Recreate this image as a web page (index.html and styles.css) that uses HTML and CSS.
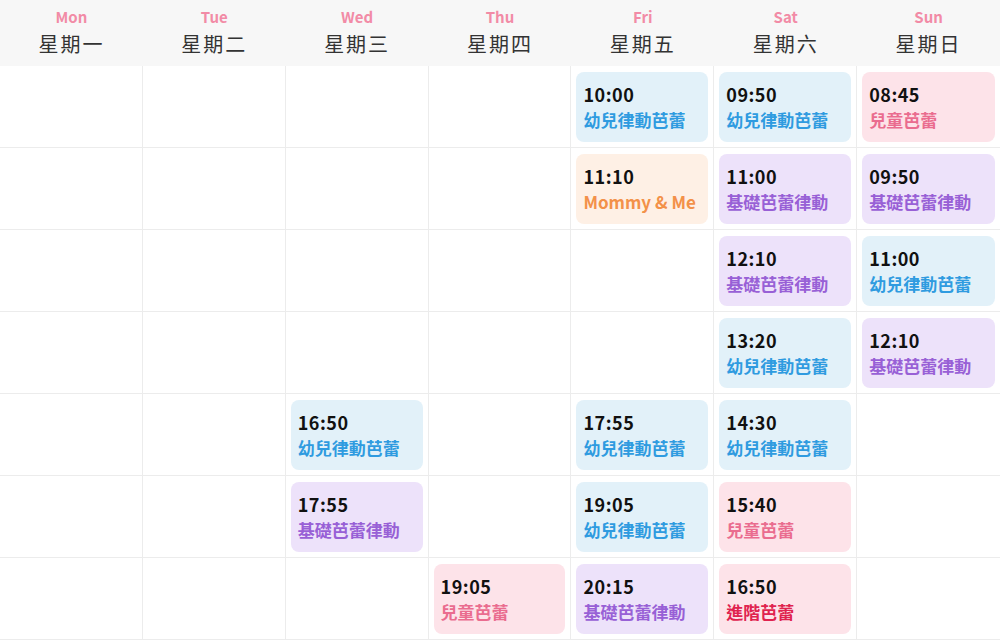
FILE: index.html
```html
<!DOCTYPE html>
<html lang="zh-Hant">

<head>
    <meta charset="UTF-8">
    <meta name="viewport" content="width=device-width, initial-scale=1.0">
    <title>課程時間表</title>
    <link rel="stylesheet" href="styles.css">
</head>

<body>
    <div class="timetable">
        <div class="week-head">
            <div class="day"><span class="en">Mon</span><span class="zh">星期一</span></div>
            <div class="day"><span class="en">Tue</span><span class="zh">星期二</span></div>
            <div class="day"><span class="en">Wed</span><span class="zh">星期三</span></div>
            <div class="day"><span class="en">Thu</span><span class="zh">星期四</span></div>
            <div class="day"><span class="en">Fri</span><span class="zh">星期五</span></div>
            <div class="day"><span class="en">Sat</span><span class="zh">星期六</span></div>
            <div class="day"><span class="en">Sun</span><span class="zh">星期日</span></div>
        </div>

        <div class="grid">
            <!-- row 1 -->
            <div class="cell"></div>
            <div class="cell"></div>
            <div class="cell"></div>
            <div class="cell"></div>
            <div class="cell"><div class="lesson blue"><span class="time">10:00</span><span class="name">幼兒律動芭蕾</span></div></div>
            <div class="cell"><div class="lesson blue"><span class="time">09:50</span><span class="name">幼兒律動芭蕾</span></div></div>
            <div class="cell"><div class="lesson pink"><span class="time">08:45</span><span class="name">兒童芭蕾</span></div></div>

            <!-- row 2 -->
            <div class="cell"></div>
            <div class="cell"></div>
            <div class="cell"></div>
            <div class="cell"></div>
            <div class="cell"><div class="lesson orange"><span class="time">11:10</span><span class="name">Mommy &amp; Me</span></div></div>
            <div class="cell"><div class="lesson purple"><span class="time">11:00</span><span class="name">基礎芭蕾律動</span></div></div>
            <div class="cell"><div class="lesson purple"><span class="time">09:50</span><span class="name">基礎芭蕾律動</span></div></div>

            <!-- row 3 -->
            <div class="cell"></div>
            <div class="cell"></div>
            <div class="cell"></div>
            <div class="cell"></div>
            <div class="cell"></div>
            <div class="cell"><div class="lesson purple"><span class="time">12:10</span><span class="name">基礎芭蕾律動</span></div></div>
            <div class="cell"><div class="lesson blue"><span class="time">11:00</span><span class="name">幼兒律動芭蕾</span></div></div>

            <!-- row 4 -->
            <div class="cell"></div>
            <div class="cell"></div>
            <div class="cell"></div>
            <div class="cell"></div>
            <div class="cell"></div>
            <div class="cell"><div class="lesson blue"><span class="time">13:20</span><span class="name">幼兒律動芭蕾</span></div></div>
            <div class="cell"><div class="lesson purple"><span class="time">12:10</span><span class="name">基礎芭蕾律動</span></div></div>

            <!-- row 5 -->
            <div class="cell"></div>
            <div class="cell"></div>
            <div class="cell"><div class="lesson blue"><span class="time">16:50</span><span class="name">幼兒律動芭蕾</span></div></div>
            <div class="cell"></div>
            <div class="cell"><div class="lesson blue"><span class="time">17:55</span><span class="name">幼兒律動芭蕾</span></div></div>
            <div class="cell"><div class="lesson blue"><span class="time">14:30</span><span class="name">幼兒律動芭蕾</span></div></div>
            <div class="cell"></div>

            <!-- row 6 -->
            <div class="cell"></div>
            <div class="cell"></div>
            <div class="cell"><div class="lesson purple"><span class="time">17:55</span><span class="name">基礎芭蕾律動</span></div></div>
            <div class="cell"></div>
            <div class="cell"><div class="lesson blue"><span class="time">19:05</span><span class="name">幼兒律動芭蕾</span></div></div>
            <div class="cell"><div class="lesson pink"><span class="time">15:40</span><span class="name">兒童芭蕾</span></div></div>
            <div class="cell"></div>

            <!-- row 7 -->
            <div class="cell"></div>
            <div class="cell"></div>
            <div class="cell"></div>
            <div class="cell"><div class="lesson pink"><span class="time">19:05</span><span class="name">兒童芭蕾</span></div></div>
            <div class="cell"><div class="lesson purple"><span class="time">20:15</span><span class="name">基礎芭蕾律動</span></div></div>
            <div class="cell"><div class="lesson red"><span class="time">16:50</span><span class="name">進階芭蕾</span></div></div>
            <div class="cell"></div>
        </div>
    </div>
</body>

</html>
```

FILE: styles.css
```css
body {
    margin: 0;
    font-family: "Noto Sans CJK TC", "Noto Sans", sans-serif;
    background: #fff;
    color: #222;
}

.timetable {
    width: 1000px;
}

.week-head {
    display: grid;
    grid-template-columns: repeat(7, 1fr);
    height: 66px;
    background-color: #f7f7f7;
}

.day {
    display: flex;
    flex-direction: column;
    align-items: center;
    padding-top: 6px;
}

.day .en {
    font-size: 15px;
    font-weight: 700;
    line-height: 22px;
    color: #f28ba6;
}

.day .zh {
    font-size: 20px;
    line-height: 32px;
    letter-spacing: 2px;
    color: #333;
}

.grid {
    display: grid;
    grid-template-columns: repeat(7, 1fr);
}

.cell {
    box-sizing: border-box;
    height: 82px;
    padding: 6px 5px 0;
    border-right: 1px solid #ececec;
    border-bottom: 1px solid #ececec;
}

.cell:nth-child(7n) {
    border-right: none;
}

.lesson {
    box-sizing: border-box;
    height: 70px;
    padding: 9px 7px 0;
    border-radius: 8px;
    display: flex;
    flex-direction: column;
}

.lesson .time {
    font-size: 18px;
    font-weight: 700;
    line-height: 26px;
    letter-spacing: 0.5px;
    color: #111;
}

.lesson .name {
    font-size: 17px;
    font-weight: 700;
    line-height: 26px;
    white-space: nowrap;
}

/* colours per class type */
.blue {
    background-color: #e2f1f9;
}

.blue .name {
    color: #2f9be0;
}

.purple {
    background-color: #ede2fa;
}

.purple .name {
    color: #9860d6;
}

.pink {
    background-color: #fde3e9;
}

.pink .name {
    color: #ea6c8f;
}

.red {
    background-color: #fde3e9;
}

.red .name {
    color: #e0234f;
}

.orange {
    background-color: #fef0e5;
}

.orange .name {
    color: #f39149;
}
```
